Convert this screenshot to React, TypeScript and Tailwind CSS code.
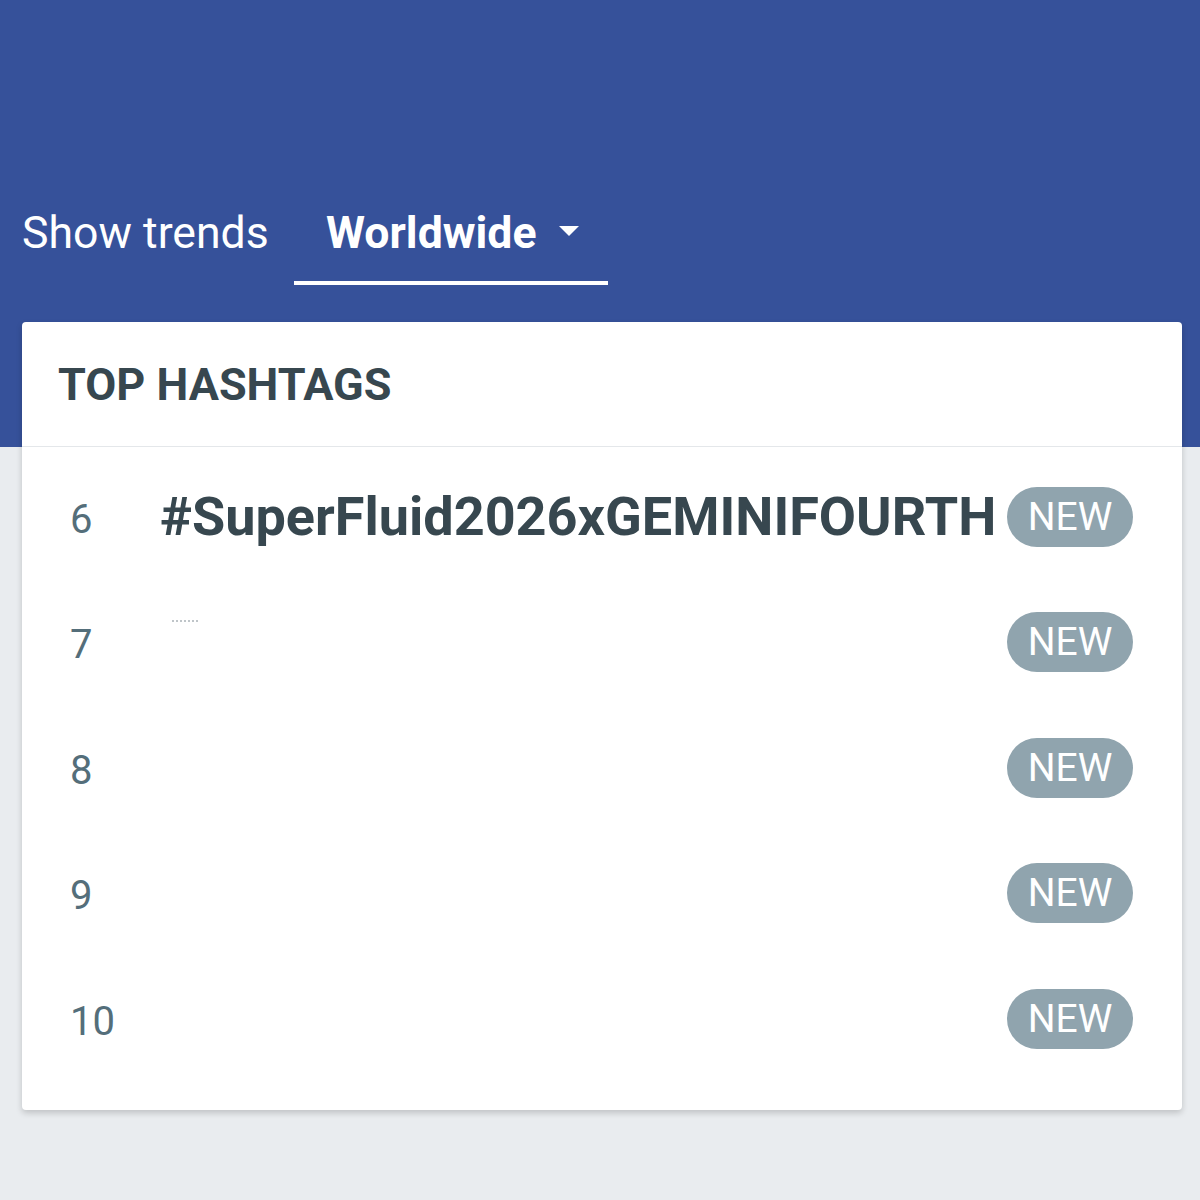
import React from "react";

const rows = [
  { n: "6", tag: "#SuperFluid2026xGEMINIFOURTH" },
  { n: "7", tag: "" },
  { n: "8", tag: "" },
  { n: "9", tag: "" },
  { n: "10", tag: "" },
];

export default function App() {
  return (
    <div className="min-h-[1200px] w-[1200px] bg-[#e9ecef] font-['Roboto',sans-serif]">
      <div className="h-[447px] bg-[#36519a] pt-[203px]">
        <div className="flex items-end">
          <div className="w-[294px] pl-[22px] pb-[22px] text-[44.6px] leading-[60px] text-white">Show trends</div>
          <div className="flex w-[314px] items-center border-b-4 border-white pb-[18px] pl-[32px] text-[44.6px] font-bold leading-[60px] text-white">
            <span>Worldwide</span>
            <svg className="ml-[21px] mt-[-4px]" width="22" height="12" viewBox="0 0 22 12">
              <path d="M1 1 L21 1 L11 11 Z" fill="white" />
            </svg>
          </div>
        </div>
      </div>
      <div className="relative ml-[22px] mt-[-125px] w-[1160px] rounded-[4px] bg-white pb-[28px] shadow-[0_3px_6px_rgba(0,0,0,0.18)]">
        <div className="flex h-[125px] items-center border-b border-[#e4e7ea] pl-[36px] pt-[2px] text-[45px] font-bold text-[#37474f]">
          TOP HASHTAGS
        </div>
        <div className="pt-[7px]">
          {rows.map((r) => (
            <div key={r.n} className="flex h-[125.5px] items-center pl-[48px] pr-[49px]">
              <div className="w-[90px] pt-[6px] text-[40px] text-[#546e7a]">{r.n}</div>
              <div className="relative flex-1 text-[54px] font-bold text-[#37474f]">
                {r.tag}
                {r.n === "7" && (
                  <span className="absolute left-[12px] top-[-22px] block h-[2px] w-[26px] border-t-2 border-dotted border-[#bfc5c9]" />
                )}
              </div>
              <div className="flex h-[60px] w-[126px] items-center justify-center rounded-full bg-[#90a4ae] text-[39px] text-white">
                NEW
              </div>
            </div>
          ))}
        </div>
      </div>
    </div>
  );
}
